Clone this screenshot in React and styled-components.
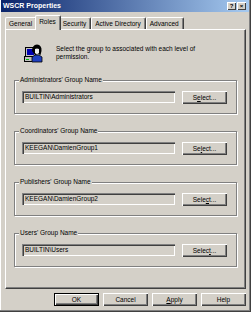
import React from 'react';
import styled, { createGlobalStyle } from 'styled-components';

const Global = createGlobalStyle`
  html, body { margin: 0; padding: 0; background: #d4d0c8; }
  body { font-family: "Liberation Sans", Arial, sans-serif; font-size: 6.5px; color: #000; }
  * { box-sizing: border-box; }
`;

const Window = styled.div`
  width: 251px;
  height: 312px;
  background: #d4d0c8;
  padding: 0 2px 2px 1px;
  box-shadow: inset -1px -1px 0 #404040, inset -2px -2px 0 #808080, inset 1px 0 0 #ffffff;
  display: flex;
  flex-direction: column;
`;

const TitleBar = styled.div`
  height: 12px;
  display: flex;
  align-items: center;
  padding: 0 3px 0 2px;
  background: linear-gradient(to right, #0a246a, #a6caf0);
`;

const Title = styled.span`
  color: #fff;
  font-weight: bold;
  font-size: 7px;
  line-height: 12px;
`;

const CaptionButtons = styled.div`
  margin-left: auto;
  display: flex;
  gap: 1px;
`;

const CaptionButton = styled.div`
  width: 9px;
  height: 8px;
  background: #d4d0c8;
  box-shadow: inset 1px 1px 0 #fff, inset -1px -1px 0 #404040;
  display: flex;
  align-items: center;
  justify-content: center;
  font-weight: bold;
  font-size: 6px;
  line-height: 8px;
`;

const TabStrip = styled.div`
  display: flex;
  align-items: flex-end;
  height: 17px;
  padding-left: 4px;
  position: relative;
  z-index: 1;
`;

const Tab = styled.div`
  height: ${p => (p.$active ? 15 : 12)}px;
  margin: 0 ${p => (p.$active ? -2 : 0)}px ${p => (p.$active ? -1 : 0)}px;
  padding: 0 4px 0 3px;
  line-height: ${p => (p.$active ? 11 : 12)}px;
  background: #d4d0c8;
  border-top: 1px solid #fff;
  border-left: 1px solid #fff;
  border-right: 1px solid #404040;
  border-radius: 2px 2px 0 0;
  box-shadow: inset -1px 0 0 #808080;
  white-space: nowrap;
  position: relative;
  z-index: ${p => (p.$active ? 2 : 1)};
`;

const Panel = styled.div`
  margin: 0 3px 0 4px;
  height: 260px;
  border-top: 1px solid #fff;
  border-left: 1px solid #fff;
  border-right: 1px solid #404040;
  border-bottom: 1px solid #404040;
  box-shadow: inset -1px -1px 0 #808080;
  padding: 0 8px 0 8px;
  display: flex;
  flex-direction: column;
`;

const Header = styled.div`
  display: flex;
  align-items: center;
  gap: 13px;
  margin: 13px 0 13px 9px;
`;

const Intro = styled.p`
  margin: 0;
  line-height: 8px;
  width: 150px;
`;

const Groups = styled.div`
  display: flex;
  flex-direction: column;
  gap: 13px;
`;

const Frame = styled.fieldset`
  margin: 0;
  min-width: 0;
  padding: 7px 9px 9px 7px;
  border: 1px solid #808080;
  box-shadow: inset 1px 1px 0 #fff, 1px 1px 0 #fff;
`;

const Legend = styled.legend`
  margin-left: -3px;
  padding: 0 1px;
  line-height: 8px;
  background: #d4d0c8;
  font-size: 6.5px;
`;

const Row = styled.div`
  display: flex;
  align-items: flex-start;
  gap: 7px;
`;

const Field = styled.div`
  flex: 1;
  height: 12px;
  line-height: 12px;
  padding-left: 3px;
  background: #d4d0c8;
  box-shadow: inset 1px 1px 0 #808080, inset 2px 2px 0 #404040, inset -1px -1px 0 #fff, inset -2px -2px 0 #d4d0c8;
  white-space: nowrap;
  overflow: hidden;
`;

const Button = styled.div`
  width: 45px;
  height: 13px;
  text-align: center;
  background: #d4d0c8;
  border: ${p => (p.$default ? '1px solid #000' : 'none')};
  line-height: ${p => (p.$default ? 11 : 13)}px;
  box-shadow: inset 1px 1px 0 #fff, inset -1px -1px 0 #404040, inset -2px -2px 0 #808080;
  flex: none;
  u { text-decoration: underline; text-underline-offset: 1px; }
`;

const ButtonBar = styled.div`
  display: flex;
  justify-content: flex-end;
  gap: 4px;
  margin: 4px 3px 0 0;
`;

const UsersIcon = () => (
  <svg width="20" height="20" viewBox="0 0 20 20">
    <rect x="1.5" y="13.5" width="14" height="5" fill="#c0c0c0" stroke="#000" />
    <rect x="3" y="16" width="3" height="1" fill="#00c000" />
    <rect x="2.5" y="4.5" width="10" height="9" fill="#c0c0c0" stroke="#000" />
    <rect x="4" y="6" width="7" height="6" fill="#0000b0" />
    <path d="M9 19 L9 14 Q12 11 16 12 L19 14 L19 19 Z" fill="#2040c0" stroke="#000" strokeWidth="0.8" />
    <path d="M9 8 Q9 2 14 1.5 Q19 2 18.5 8 L17.5 12 L15 11 L12 12 Z" fill="#000" />
    <path d="M12 6 Q14 5 16 6 L16 10 Q14 12 12 10 Z" fill="#f0f0f0" />
  </svg>
);

const groups = [
  { label: "Administrators' Group Name", value: 'BUILTIN\\Administrators', key: 'e' },
  { label: "Coordinators' Group Name", value: 'KEEGAN\\DamienGroup1', key: 'l' },
  { label: "Publishers' Group Name", value: 'KEEGAN\\DamienGroup2', key: 'c' },
  { label: "Users' Group Name", value: 'BUILTIN\\Users', key: 't' },
];

const SelectLabel = ({ k }) => {
  const word = 'Select';
  const i = word.indexOf(k);
  return (
    <>
      {word.slice(0, i)}
      <u>{word[i]}</u>
      {word.slice(i + 1)}...
    </>
  );
};

export default function App() {
  return (
    <>
      <Global />
      <Window>
        <TitleBar>
          <Title>WSCR Properties</Title>
          <CaptionButtons>
            <CaptionButton>?</CaptionButton>
            <CaptionButton>×</CaptionButton>
          </CaptionButtons>
        </TitleBar>
        <TabStrip>
          <Tab>General</Tab>
          <Tab $active>Roles</Tab>
          <Tab>Security</Tab>
          <Tab>Active Directory</Tab>
          <Tab>Advanced</Tab>
        </TabStrip>
        <Panel>
          <Header>
            <UsersIcon />
            <Intro>Select the group to associated with each level of permission.</Intro>
          </Header>
          <Groups>
            {groups.map(g => (
              <Frame key={g.label}>
                <Legend>{g.label}</Legend>
                <Row>
                  <Field>{g.value}</Field>
                  <Button><SelectLabel k={g.key} /></Button>
                </Row>
              </Frame>
            ))}
          </Groups>
        </Panel>
        <ButtonBar>
          <Button $default>OK</Button>
          <Button>Cancel</Button>
          <Button><u>A</u>pply</Button>
          <Button>Help</Button>
        </ButtonBar>
      </Window>
    </>
  );
}
